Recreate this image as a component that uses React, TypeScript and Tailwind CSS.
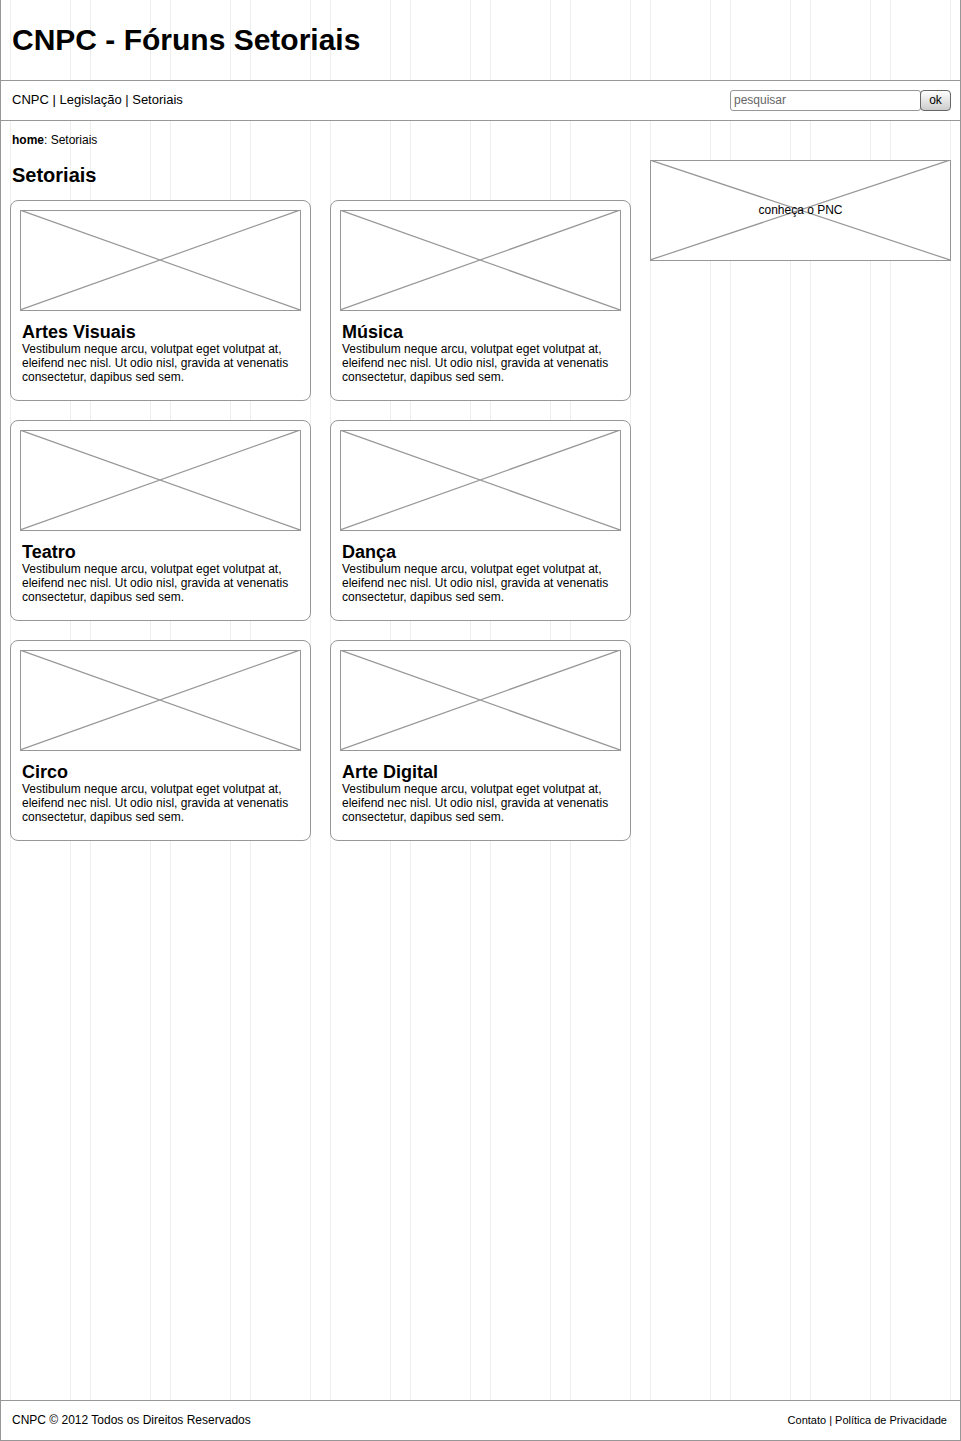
import type { ReactNode } from "react";

const blurb =
  "Vestibulum neque arcu, volutpat eget volutpat at, eleifend nec nisl. Ut odio nisl, gravida at venenatis consectetur, dapibus sed sem.";

const sectors = ["Artes Visuais", "Música", "Teatro", "Dança", "Circo", "Arte Digital"];

function Placeholder({ children }: { children?: ReactNode }) {
  return (
    <div className="relative flex h-[101px] items-center justify-center border border-[#979797] bg-white pb-0.5">
      <svg
        className="absolute -left-px -top-px h-[calc(100%+1px)] w-[calc(100%+1px)]"
        viewBox="0 0 100 100"
        preserveAspectRatio="none"
        fill="none"
        stroke="#979797"
        strokeWidth="1.2"
        aria-hidden="true"
      >
        <path d="M0 0 100 100M100 0 0 100" vectorEffect="non-scaling-stroke" />
      </svg>
      {children}
    </div>
  );
}

function SectorCard({ title }: { title: string }) {
  return (
    <article className="h-[201px] rounded-lg border border-[#979797] bg-white p-[9px]">
      <Placeholder />
      <div className="pl-0.5 pt-[11px]">
        <h3 className="text-[18px] font-bold leading-5">
          <a href="#">{title}</a>
        </h3>
        <p className="text-xs leading-[14px]">{blurb}</p>
      </div>
    </article>
  );
}

export default function App() {
  return (
    <div className="flex min-h-screen flex-col border-x border-b border-[#979797] bg-white bg-[repeating-linear-gradient(to_right,transparent_0px,transparent_9px,#eeeeee_9px,#eeeeee_10px,transparent_10px,transparent_69px,#eeeeee_69px,#eeeeee_70px,transparent_70px,transparent_80px)] font-['Liberation_Sans',Arial,sans-serif] text-xs text-black">
      <header>
        <div className="flex h-20 items-center px-[11px]">
          <h1 className="text-[30px] font-bold leading-9">CNPC - Fóruns Setoriais</h1>
        </div>
        <div className="flex h-[41px] items-center justify-between border-y border-[#979797] bg-white pl-[11px] pr-[9px]">
          <nav className="pb-0.5 text-[13px]" aria-label="Principal">
            <a href="#">CNPC</a> | <a href="#">Legislação</a> | <a href="#">Setoriais</a>
          </nav>
          <form className="flex h-[21px]" role="search" onSubmit={(e) => e.preventDefault()}>
            <input
              type="search"
              aria-label="pesquisar"
              placeholder="pesquisar"
              className="w-[191px] rounded-[3px] border border-[#979797] bg-white px-[3px] pb-0.5 outline-none placeholder:text-[#666666]"
            />
            <button
              type="submit"
              className="-ml-px w-[31px] rounded-[4px] border border-[#666666] bg-linear-to-b from-white to-[#cccccc] pb-px"
            >
              ok
            </button>
          </form>
        </div>
      </header>

      <main className="flex-1 px-[9px]">
        <div className="flex h-[39px] items-center pb-0.5 pl-0.5">
          <p>
            <a href="#" className="font-bold">
              home
            </a>
            : Setoriais
          </p>
        </div>
        <div className="grid grid-cols-3 gap-[19px]">
          <section className="col-span-2">
            <h2 className="flex h-10 items-center pb-[10px] pl-0.5 text-[20px] font-bold">Setoriais</h2>
            <div className="grid grid-cols-2 gap-[19px]">
              {sectors.map((title) => (
                <SectorCard key={title} title={title} />
              ))}
            </div>
          </section>
          <aside>
            <Placeholder>
              <a href="#" className="relative">
                conheça o PNC
              </a>
            </Placeholder>
          </aside>
        </div>
      </main>

      <footer className="flex h-10 items-center justify-between border-t border-[#979797] bg-white pl-[11px] pr-[13px]">
        <p className="pb-0.5">CNPC © 2012 Todos os Direitos Reservados</p>
        <p className="text-[11px]">
          <a href="#">Contato</a> | <a href="#">Política de Privacidade</a>
        </p>
      </footer>
    </div>
  );
}
